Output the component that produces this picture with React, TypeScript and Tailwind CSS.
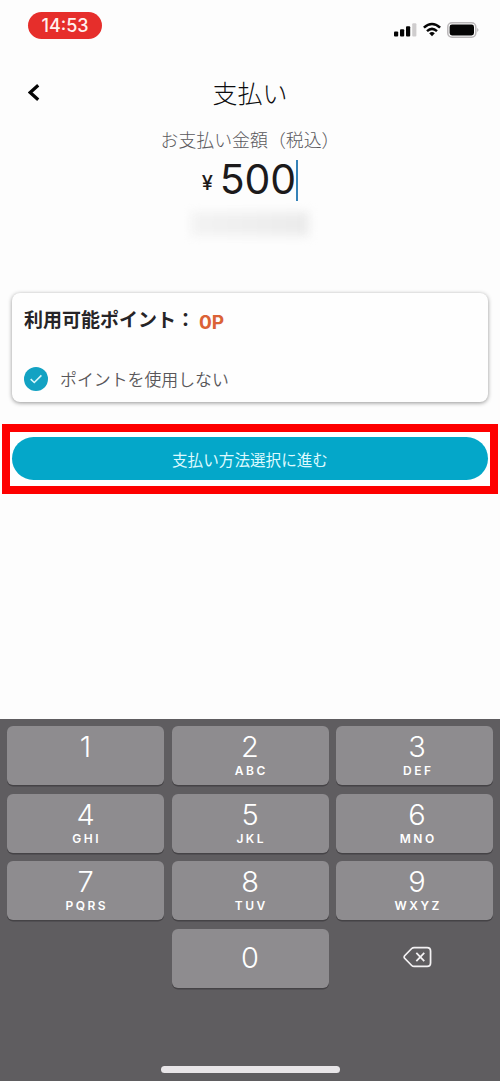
import { FC } from "react";

interface KeyData {
  digit: string;
  letters?: string;
}

const KEYS: KeyData[] = [
  { digit: "1", letters: "" },
  { digit: "2", letters: "ABC" },
  { digit: "3", letters: "DEF" },
  { digit: "4", letters: "GHI" },
  { digit: "5", letters: "JKL" },
  { digit: "6", letters: "MNO" },
  { digit: "7", letters: "PQRS" },
  { digit: "8", letters: "TUV" },
  { digit: "9", letters: "WXYZ" },
];

const StatusBar: FC = () => (
  <div className="flex h-[52px] items-start justify-between pt-3 pr-5 pl-7">
    <div className="flex h-[27px] w-[74px] items-center justify-center rounded-full bg-[#e62e2b] font-['Inter',sans-serif] text-[18px] font-medium text-[#fff1ee]">
      14:53
    </div>
    <div className="flex h-9 items-center">
      <svg width="24" height="16" viewBox="0 0 24 16" fill="#050505">
        <rect x="0" y="9.5" width="4.2" height="5" rx="1" />
        <rect x="6" y="7.2" width="4.2" height="7.3" rx="1" />
        <rect x="12" y="4.2" width="4.2" height="10.3" rx="1" />
        <rect x="18.2" y="1.2" width="4.2" height="13.3" rx="1" fill="#cfcdce" />
      </svg>
      <svg className="ml-[5px]" width="18" height="16" viewBox="0 0 18 16" fill="none" stroke="#050505">
        <path d="M.9 5.6Q9-1.6 17.1 5.6" strokeWidth="2.6" />
        <path d="M4 9.1Q9 4.7 14 9.1" strokeWidth="2.5" />
        <path d="M6.2 11.2Q9 9 11.8 11.2L9 14.3Z" fill="#050505" stroke="none" />
      </svg>
      <svg className="ml-1.5" width="33" height="16" viewBox="0 0 33 16">
        <rect x=".8" y=".8" width="28" height="14.4" rx="4.2" fill="#fdfdfd" stroke="#b9b6b8" strokeWidth="1.5" />
        <rect x="2.6" y="2.6" width="24.4" height="10.8" rx="2.4" fill="#050505" />
        <path d="M30.5 5.8Q32.2 8 30.5 10.2Z" fill="#8d8a8c" />
      </svg>
    </div>
  </div>
);

const Header: FC = () => (
  <header className="grid h-20 grid-cols-[60px_1fr_60px] items-center">
    <button className="pl-7" aria-label="戻る">
      <svg width="12" height="17" viewBox="0 0 12 17" fill="none" stroke="#050505" strokeWidth="3.2">
        <path d="M10.2 1.2L2.2 8.5L10.2 15.8" />
      </svg>
    </button>
    <h1 className="text-center text-[25px] leading-8 font-light text-[#0c0c0e]">支払い</h1>
  </header>
);

const Amount: FC = () => (
  <section className="flex h-[161px] flex-col items-center">
    <p className="h-[26px] pt-[1px] text-[17.9px] leading-[12px] font-light text-[#59585c]">お支払い金額（税込）</p>
    <div className="flex h-[44px] items-center font-['Inter',sans-serif] text-[#1c1a1b]">
      <span className="mt-[5px] mr-[7px] text-[20px] leading-5 font-medium">¥</span>
      <span className="mb-[3px] text-[41px] leading-[42px] font-normal tracking-[-0.2px]">500</span>
      <span className="h-[41px] w-[2.5px] bg-[#3482b8]" />
    </div>
    <div className="mt-[10px] h-[24px] w-[118px] bg-linear-to-r from-[#f3f3f3] to-[#ebebeb] blur-[5px]" />
  </section>
);

const PointsCard: FC = () => (
  <section className="mx-3 h-[109px] rounded-lg bg-[#fefefe] pt-[12px] pl-3 shadow-[0_1px_4px_rgba(0,0,0,0.42)]">
    <div className="flex h-[28px] items-center">
      <h2 className="text-[19px] leading-7 font-bold text-[#262427]">利用可能ポイント：</h2>
      <span className="mt-[7px] ml-[4px] font-['Inter',sans-serif] text-[19px] leading-6 font-bold text-[#db6236]">
        0P
      </span>
    </div>
    <div className="mt-[34px] flex h-6 items-center gap-[12px]">
      <svg width="24" height="24" viewBox="0 0 24 24" fill="none">
        <circle cx="12" cy="12" r="12" fill="#12a2c3" />
        <path d="M6.7 12.2L10.3 15.5L17.4 8.4" stroke="#d9f7fb" strokeWidth="1.6" />
      </svg>
      <span className="text-[16.9px] leading-6 font-[350] text-[#59575a]">ポイントを使用しない</span>
    </div>
  </section>
);

const Key: FC<KeyData> = ({ digit, letters }) => (
  <button
    className={`flex h-[59px] flex-col items-center rounded-md bg-[#8e8c8f] text-white shadow-[0_1.5px_0_#454346] nth-[3n]:pl-[5px] ${
      letters === undefined ? "justify-center pb-[2px]" : "pt-[6px]"
    }`}
  >
    <span className="text-[29px] leading-[30px] font-[350]">{digit}</span>
    {letters && (
      <span className="mt-[1px] pl-[2.5px] text-[12px] leading-[15px] font-semibold tracking-[2.5px]">
        {letters}
      </span>
    )}
  </button>
);

const Keypad: FC = () => (
  <section className="flex h-[362px] flex-col items-center justify-between bg-[#5f5d60] pt-[7px] pb-2 font-['Inter',sans-serif]">
    <div className="grid w-[486px] grid-cols-3 gap-x-[7.5px] gap-y-[8.7px]">
      {KEYS.map((key) => (
        <Key key={key.digit} {...key} />
      ))}
      <span />
      <Key digit="0" />
      <button className="flex items-center justify-center pb-[3px] pl-[5px]" aria-label="削除">
        <svg width="29" height="22" viewBox="0 0 30 22" fill="none" stroke="#f4f2f4" strokeWidth="1.8">
          <path d="M11.5 1.2H25Q28.5 1.2 28.5 4.7V17.3Q28.5 20.8 25 20.8H11.5Q10 20.8 9 19.8L1.7 12.3Q.7 11 1.7 9.7L9 2.2Q10 1.2 11.5 1.2Z" />
          <path d="M13.8 6.8L22 15.2M22 6.8L13.8 15.2" />
        </svg>
      </button>
    </div>
    <div className="h-[7px] w-[179px] rounded-full bg-[#e8e5e8]" />
  </section>
);

export default function App() {
  return (
    <main className="flex h-[1081px] w-[500px] flex-col overflow-hidden bg-[#fdfdfd] font-['Noto_Sans_CJK_JP',sans-serif]">
      <StatusBar />
      <Header />
      <Amount />
      <PointsCard />
      <div className="mx-0.5 mt-[22px] h-[70px] border-8 border-[#fe0000] bg-white px-0.5 pt-[5px]">
        <button className="flex h-[43px] w-full items-center justify-center rounded-full bg-[#04a7c9] text-[15.6px] leading-6 text-[#ddfaff]">
          支払い方法選択に進む
        </button>
      </div>
      <div className="flex-1" />
      <Keypad />
    </main>
  );
}
